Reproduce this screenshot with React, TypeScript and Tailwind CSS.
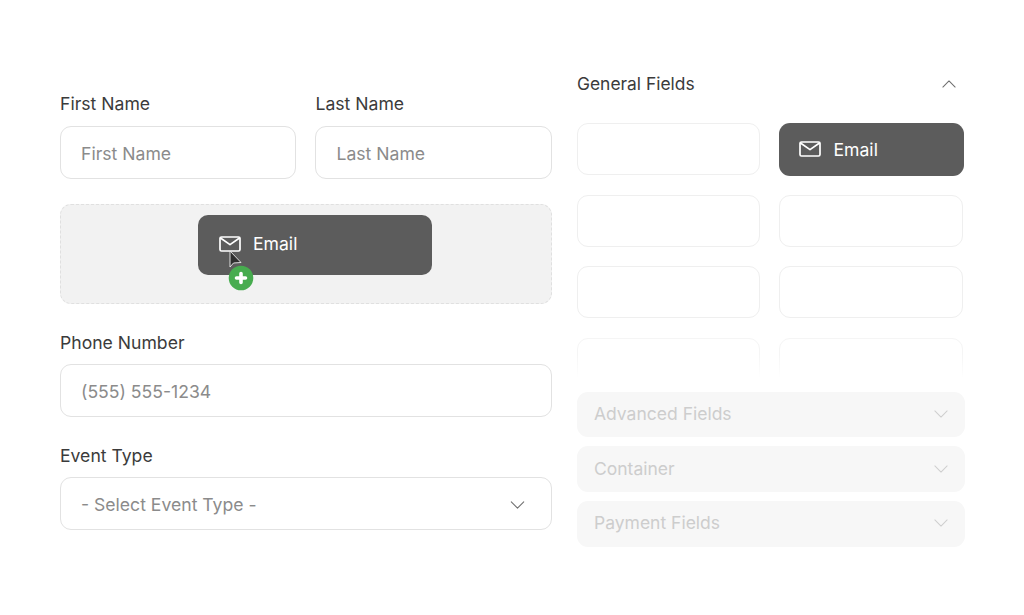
import React from "react";

const Mail = ({ className }: { className: string }) => (
  <svg viewBox="0 0 22 16" fill="none" stroke="currentColor" strokeWidth="1.7" strokeLinejoin="round" strokeLinecap="round" className={className}>
    <rect x="1" y="1" width="20" height="14" rx="1.5" />
    <path d="M1.5 2 L11 8.6 L20.5 2" />
  </svg>
);

const Chevron = ({ up, className }: { up?: boolean; className: string }) => (
  <svg viewBox="0 0 16 9" fill="none" stroke="currentColor" strokeWidth="1.2" strokeLinecap="round" strokeLinejoin="round" className={className}>
    <path d={up ? "M1 8 L8 1 L15 8" : "M1 1 L8 8 L15 1"} />
  </svg>
);

const Label = ({ children, lower }: { children: React.ReactNode; lower?: boolean }) => (
  <div className={lower ? "h-6 mb-[10px] pl-[0.5px] pt-[0.5px] text-[17.6px] leading-6 text-[#3b3b3b]" : "h-6 mb-[10px] pl-[0.5px] text-[17.6px] leading-6 text-[#3b3b3b]"}>{children}</div>
);

const Field = ({ children }: { children: React.ReactNode }) => (
  <div className="h-[52.5px] rounded-[11px] border border-[#e2e2e2] bg-white pt-[3px] pl-[20.5px] pr-[26px] flex items-center justify-between text-[17.6px] text-[#8b8b8b]">
    {children}
  </div>
);

const Slot = () => <div className="h-[52px] rounded-[11px] border border-[#efefef] bg-white" />;

const FadedSlot = () => <div className="h-[52px] rounded-[11px] border border-[#f5f5f5] bg-white" />;

const Section = ({ name }: { name: string }) => (
  <div className="h-[45.5px] rounded-[11px] bg-[#f7f7f7] pl-[17.5px] pr-[17px] pb-[1px] flex items-center justify-between text-[17.5px] text-[#cdcdcd]">
    <span>{name}</span>
    <Chevron className="w-[14px] h-2 text-[#cfcfcf]" />
  </div>
);

export default function App() {
  return (
    <div className="relative w-[1024px] h-[615px] overflow-hidden bg-white font-['Inter',sans-serif] flex pl-[59.5px] gap-[25px]">
      <div className="w-[492px] pt-[92px] shrink-0">
        <div className="grid grid-cols-2 gap-[19px]">
          <div>
            <Label>First Name</Label>
            <Field>First Name</Field>
          </div>
          <div>
            <Label>Last Name</Label>
            <Field>Last Name</Field>
          </div>
        </div>

        <div className="relative mt-[25px] h-[100px] rounded-[11px] border border-dashed border-[#e0e0e0] bg-[#f2f2f2]">
          <div className="absolute left-[137.5px] top-[10px] w-[233.5px] h-[60px] rounded-[10px] bg-[#5c5c5c] pl-[21px] flex items-center gap-3 text-[17.6px] text-white">
            <Mail className="w-[22px] h-4 -mt-[1px]" />
            <span>Email</span>
          </div>
          <svg viewBox="0 0 14 19" className="absolute left-[168.5px] top-[45.2px] w-[14px] h-[19px]">
            <path d="M1 1 L1 17 L4.5 13 L12 12.5 Z" fill="#2e2e2e" stroke="#ececec" strokeWidth="0.9" strokeLinejoin="round" />
          </svg>
          <svg viewBox="0 0 26 26" className="absolute left-[167.5px] top-[60.8px] w-[26px] h-[26px]">
            <circle cx="13" cy="13" r="12.3" fill="#47ac4f" />
            <path d="M13 8.5 V17.5 M8.5 13 H17.5" stroke="#fff" strokeWidth="3.6" strokeLinecap="round" />
          </svg>
        </div>

        <div className="mt-[26.5px]">
          <Label lower>Phone Number</Label>
          <Field>(555) 555-1234</Field>
        </div>
        <div className="mt-[26.5px]">
          <Label lower>Event Type</Label>
          <Field>
            <span>- Select Event Type -</span>
            <Chevron className="w-[15px] h-2 text-[#6f6f6f]" />
          </Field>
        </div>
      </div>

      <div className="w-[388px] pt-[72px] shrink-0">
        <div className="h-6 flex items-center justify-between pl-[0.5px] pr-[9px] text-[17.4px] text-[#3b3b3b]">
          <span>General Fields</span>
          <Chevron up className="w-[14px] h-2 text-[#6f6f6f]" />
        </div>
        <div className="relative mt-[26.7px] h-[255px] overflow-hidden">
          <div className="grid grid-cols-[183.5px_184px] gap-x-[18.5px] gap-y-[19.6px] py-[0.5px]">
            <Slot />
            <div className="h-[53px] -my-[0.5px] -mr-[1px] rounded-[11px] bg-[#5c5c5c] pl-5 flex items-center gap-[13px] text-[17.6px] text-white">
              <Mail className="w-[22px] h-4" />
              <span className="pt-[2px]">Email</span>
            </div>
            <Slot />
            <Slot />
            <Slot />
            <Slot />
            <FadedSlot />
            <FadedSlot />
          </div>
          <div className="absolute inset-x-0 bottom-0 h-[24px] bg-gradient-to-t from-white to-transparent" />
        </div>
        <div className="mt-[14px] flex flex-col gap-[9.2px]">
          <Section name="Advanced Fields" />
          <Section name="Container" />
          <Section name="Payment Fields" />
        </div>
      </div>
    </div>
  );
}
